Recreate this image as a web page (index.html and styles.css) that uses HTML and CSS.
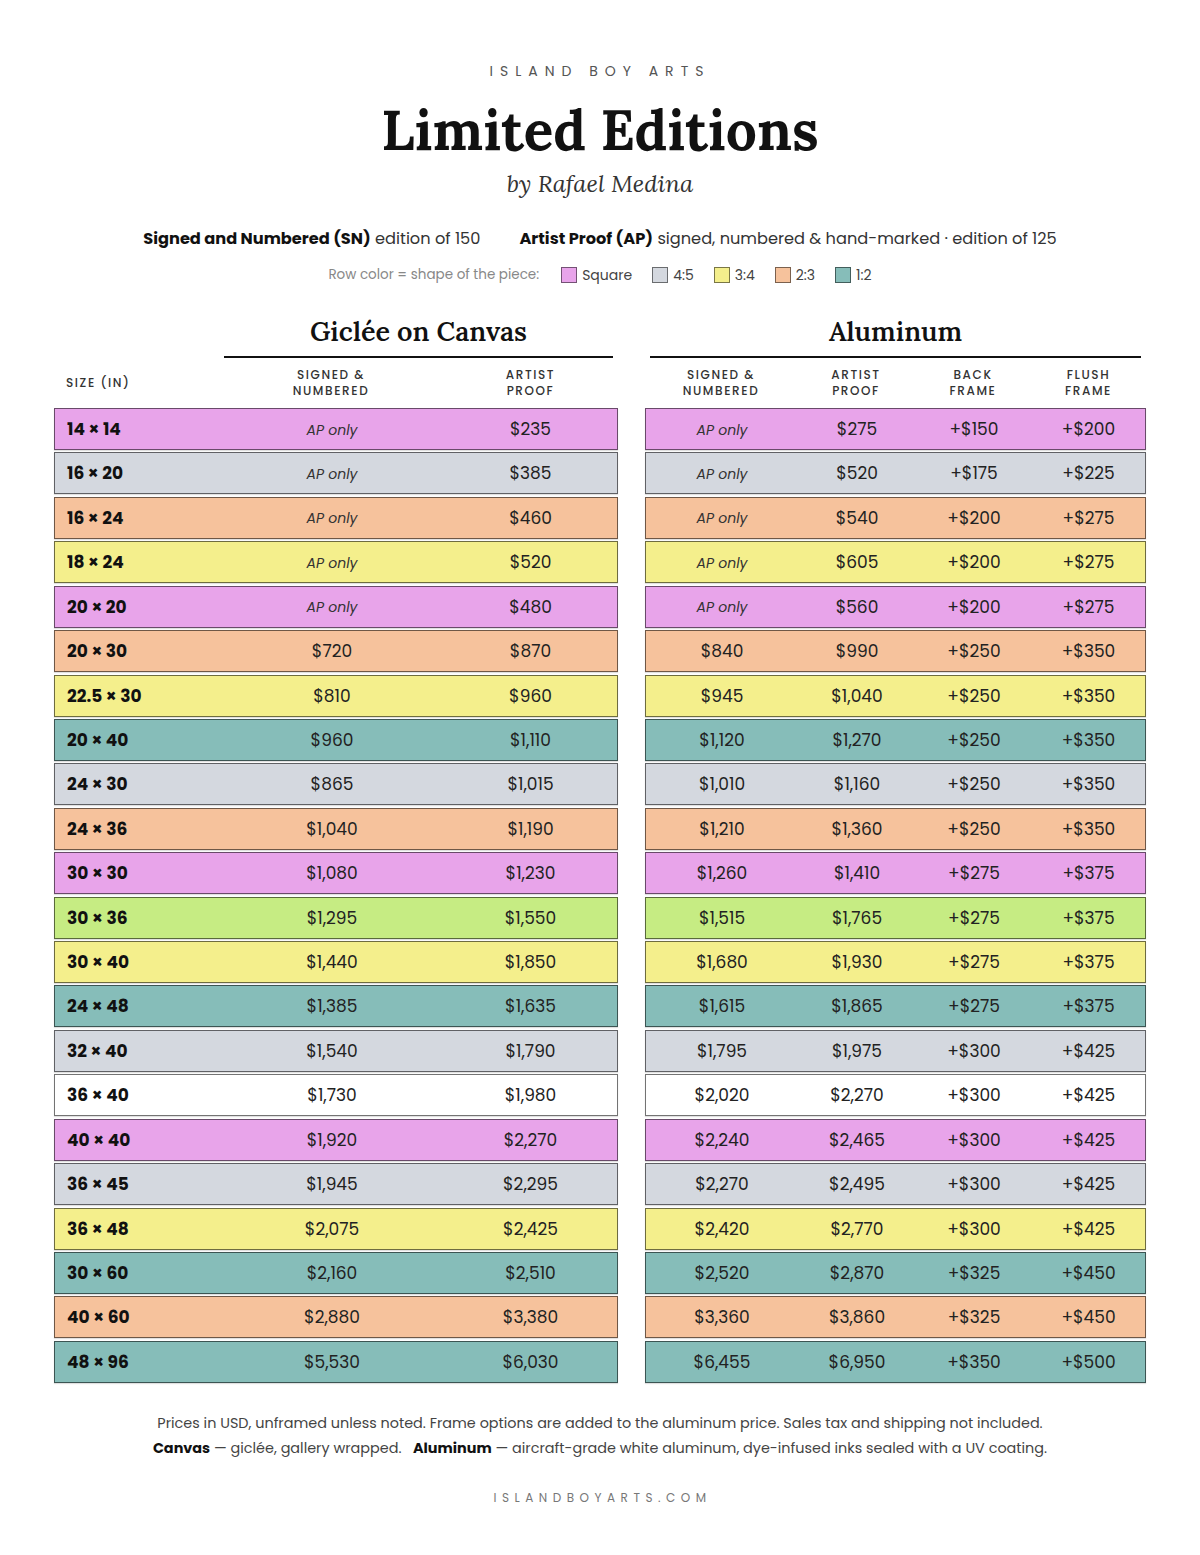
FILE: index.html
```html
<!DOCTYPE html>
<html lang="en">
<head>
<meta charset="utf-8">
<title>Limited Editions — Island Boy Arts</title>
<link rel="stylesheet" href="styles.css">
</head>
<body>
<div class="page">
  <header class="masthead">
    <div class="brand">ISLAND BOY ARTS</div>
    <h1 class="title">Limited Editions</h1>
    <div class="byline">by Rafael Medina</div>
    <div class="editions">
      <span><b>Signed and Numbered (SN)</b> edition of 150</span>
      <span><b>Artist Proof (AP)</b> signed, numbered &amp; hand-marked · edition of 125</span>
    </div>
    <div class="legend">
      <span class="legend-label">Row color = shape of the piece:</span>
      <span class="key"><i class="sw c-sq"></i>Square</span>
      <span class="key"><i class="sw c-45"></i>4:5</span>
      <span class="key"><i class="sw c-34"></i>3:4</span>
      <span class="key"><i class="sw c-23"></i>2:3</span>
      <span class="key"><i class="sw c-12"></i>1:2</span>
    </div>
  </header>

  <main class="tables" id="tables">
    <section class="tbl canvas">
      <div class="group-head">
        <div class="spacer"></div>
        <h2 class="group-title">Giclée on Canvas</h2>
      </div>
      <div class="col-head">
        <div class="size-h">SIZE (IN)</div>
        <div>SIGNED &amp;<br>NUMBERED</div>
        <div>ARTIST<br>PROOF</div>
      </div>
      <div class="rows" id="canvasRows"></div>
    </section>
    <section class="tbl alu">
      <div class="group-head">
        <h2 class="group-title">Aluminum</h2>
      </div>
      <div class="col-head">
        <div>SIGNED &amp;<br>NUMBERED</div>
        <div>ARTIST<br>PROOF</div>
        <div>BACK<br>FRAME</div>
        <div>FLUSH<br>FRAME</div>
      </div>
      <div class="rows" id="aluRows"></div>
    </section>
  </main>

  <footer class="foot">
    <p>Prices in USD, unframed unless noted. Frame options are added to the aluminum price. Sales tax and shipping not included.</p>
    <p><b>Canvas</b> — giclée, gallery wrapped. &nbsp; <b>Aluminum</b> — aircraft-grade white aluminum, dye-infused inks sealed with a UV coating.</p>
    <div class="site">ISLANDBOYARTS.COM</div>
  </footer>
</div>
<script>
const data = [
 ["14 × 14","sq",null,"$235",null,"$275","+$150","+$200"],
 ["16 × 20","45",null,"$385",null,"$520","+$175","+$225"],
 ["16 × 24","23",null,"$460",null,"$540","+$200","+$275"],
 ["18 × 24","34",null,"$520",null,"$605","+$200","+$275"],
 ["20 × 20","sq",null,"$480",null,"$560","+$200","+$275"],
 ["20 × 30","23","$720","$870","$840","$990","+$250","+$350"],
 ["22.5 × 30","34","$810","$960","$945","$1,040","+$250","+$350"],
 ["20 × 40","12","$960","$1,110","$1,120","$1,270","+$250","+$350"],
 ["24 × 30","45","$865","$1,015","$1,010","$1,160","+$250","+$350"],
 ["24 × 36","23","$1,040","$1,190","$1,210","$1,360","+$250","+$350"],
 ["30 × 30","sq","$1,080","$1,230","$1,260","$1,410","+$275","+$375"],
 ["30 × 36","gr","$1,295","$1,550","$1,515","$1,765","+$275","+$375"],
 ["30 × 40","34","$1,440","$1,850","$1,680","$1,930","+$275","+$375"],
 ["24 × 48","12","$1,385","$1,635","$1,615","$1,865","+$275","+$375"],
 ["32 × 40","45","$1,540","$1,790","$1,795","$1,975","+$300","+$425"],
 ["36 × 40","wh","$1,730","$1,980","$2,020","$2,270","+$300","+$425"],
 ["40 × 40","sq","$1,920","$2,270","$2,240","$2,465","+$300","+$425"],
 ["36 × 45","45","$1,945","$2,295","$2,270","$2,495","+$300","+$425"],
 ["36 × 48","34","$2,075","$2,425","$2,420","$2,770","+$300","+$425"],
 ["30 × 60","12","$2,160","$2,510","$2,520","$2,870","+$325","+$450"],
 ["40 × 60","23","$2,880","$3,380","$3,360","$3,860","+$325","+$450"],
 ["48 × 96","12","$5,530","$6,030","$6,455","$6,950","+$350","+$500"]
];
const cell = v => v === null ? '<div class="ap">AP only</div>' : '<div>' + v + '</div>';
let c = '', a = '';
for (const r of data) {
  c += '<div class="row c-' + r[1] + '"><div class="size">' + r[0] + '</div>' + cell(r[2]) + cell(r[3]) + '</div>';
  a += '<div class="row c-' + r[1] + '">' + cell(r[4]) + cell(r[5]) + cell(r[6]) + cell(r[7]) + '</div>';
}
document.getElementById('canvasRows').innerHTML = c;
document.getElementById('aluRows').innerHTML = a;
</script>
</body>
</html>
```
FILE: styles.css
```css
* { box-sizing: border-box; }
body {
  margin: 0;
  background: #fff;
  color: #222;
  font-family: "Poppins", "Inter", "Liberation Sans", sans-serif;
}
.page {
  width: 1092px;
  margin: 0 auto;
  padding-top: 62px;
}
.masthead { text-align: center; }
.brand {
  font-size: 14px;
  letter-spacing: 7px;
  color: #555;
  line-height: 18px;
}
.title {
  font-family: "Lora", "Liberation Serif", serif;
  font-weight: bold;
  font-size: 55px;
  line-height: 64px;
  margin: 18px 0 0;
  color: #111;
}
.byline {
  font-family: "Lora", "Liberation Serif", serif;
  font-style: italic;
  font-size: 24px;
  color: #333;
  line-height: 30px;
  margin-top: 7px;
}
.editions {
  margin-top: 28px;
  font-size: 16.2px;
  line-height: 24px;
  color: #333;
  display: flex;
  justify-content: center;
  gap: 39px;
}
.editions b { color: #111; font-weight: 700; }
.legend {
  margin-top: 14px;
  font-size: 14px;
  line-height: 20px;
  color: #444;
  display: flex;
  justify-content: center;
  align-items: center;
  gap: 20px;
}
.legend-label { color: #888; margin-right: 2px; font-size: 13.5px; }
.key { display: inline-flex; align-items: center; gap: 5px; }
.sw {
  display: inline-block;
  width: 16px;
  height: 16px;
  border: 1px solid rgba(0,0,0,0.5);
}

.c-sq { background: #e8a4ea; }
.c-45 { background: #d4d8df; }
.c-23 { background: #f6c29c; }
.c-34 { background: #f4ef8c; }
.c-12 { background: #86bdb9; }
.c-gr { background: #c6ec83; }
.c-wh { background: #ffffff; }

.tables {
  margin-top: 29px;
  display: flex;
  gap: 27px;
}
.tbl.canvas { width: 564px; }
.tbl.alu { width: 501px; }
.group-head {
  display: flex;
}
.canvas .spacer { width: 165px; }
.group-title {
  flex: 1;
  margin: 0 5px;
  text-align: center;
  font-family: "Lora", "Liberation Serif", serif;
  font-weight: 600;
  font-size: 27px;
  line-height: 34px;
  color: #111;
  padding-bottom: 8px;
  border-bottom: 2px solid #111;
}
.col-head {
  display: grid;
  align-items: center;
  height: 50px;
  font-size: 12px;
  line-height: 16px;
  letter-spacing: 1.6px;
  font-weight: 500;
  color: #333;
  text-align: center;
}
.canvas .col-head, .canvas .row { grid-template-columns: 165px 224px 1fr; }
.alu .col-head, .alu .row { grid-template-columns: 152px 118px 116px 1fr; }
.col-head .size-h { text-align: left; padding-left: 12px; }

.rows {
  display: flex;
  flex-direction: column;
  gap: 2.43px;
}
.row {
  display: grid;
  align-items: center;
  height: 42px;
  border: 1px solid rgba(0,0,0,0.55);
  box-shadow: 0 1px 1px rgba(0,0,0,0.12);
  font-size: 17px;
  color: #222;
  text-align: center;
}
.row .size {
  text-align: left;
  padding-left: 12px;
  font-weight: 700;
  color: #111;
}
.row .ap {
  font-style: italic;
  font-size: 14px;
  color: #333;
  padding-top: 2px;
}

.foot {
  margin-top: 28px;
  text-align: center;
  font-size: 14.4px;
  line-height: 25px;
  color: #444;
}
.foot p { margin: 0; }
.foot b { color: #111; }
.site {
  margin-top: 24px;
  font-size: 12px;
  letter-spacing: 5.5px;
  color: #777;
  padding-left: 5px;
}
```
